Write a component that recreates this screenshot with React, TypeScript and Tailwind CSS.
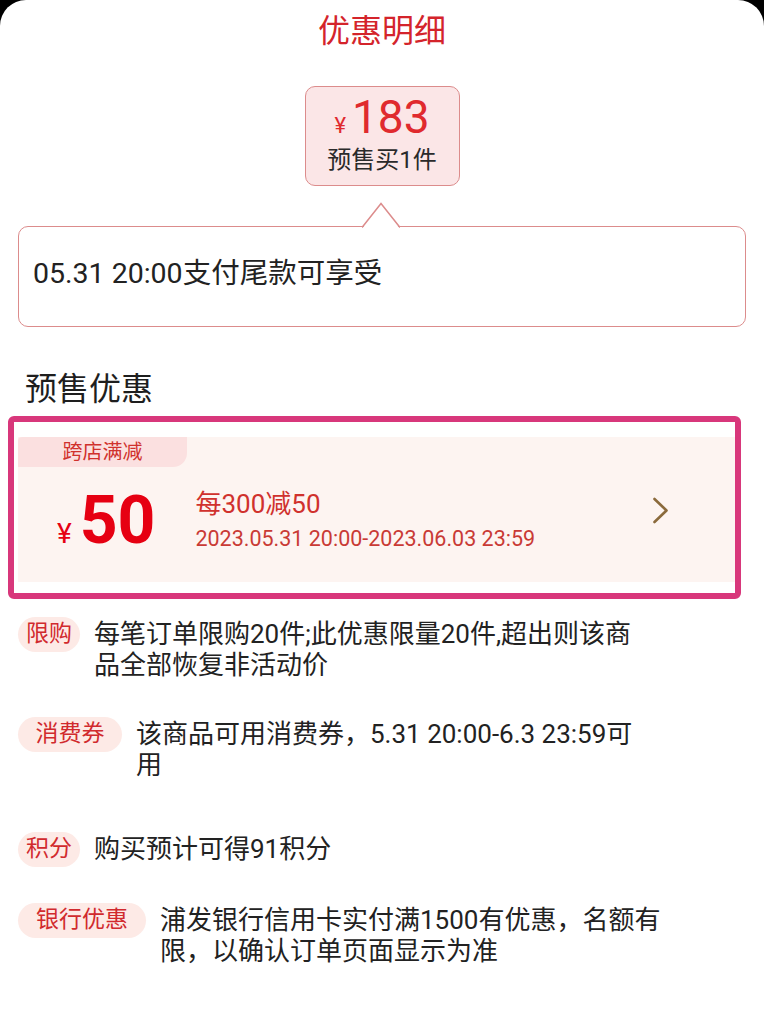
const font = { fontFamily: 'Roboto, "Noto Sans CJK SC", sans-serif' };

interface Rule {
  label: string;
  pillWidth: string;
  top: string;
  lines: string[];
}

const rules: Rule[] = [
  {
    label: '限购',
    pillWidth: 'w-[62px]',
    top: 'mt-[18px]',
    lines: ['每笔订单限购20件;此优惠限量20件,超出则该商', '品全部恢复非活动价'],
  },
  {
    label: '消费券',
    pillWidth: 'w-[104px]',
    top: 'mt-[36px]',
    lines: ['该商品可用消费券，5.31 20:00-6.3 23:59可', '用'],
  },
  {
    label: '积分',
    pillWidth: 'w-[62px]',
    top: 'mt-[51px]',
    lines: ['购买预计可得91积分'],
  },
  {
    label: '银行优惠',
    pillWidth: 'w-[128px]',
    top: 'mt-[36px]',
    lines: ['浦发银行信用卡实付满1500有优惠，名额有', '限，以确认订单页面显示为准'],
  },
];

function PriceBubble() {
  return (
    <div className="flex justify-center mt-[39px]">
      <div className="w-[155px] h-[100px] rounded-[10px] border-[1.5px] border-[#dc8c8c] bg-[#fbe6e7] flex flex-col items-center pt-[6px]">
        <div className="flex items-baseline text-[#e02a2e]">
          <span className="text-[22px] mr-[6px]">¥</span>
          <span className="text-[46px] leading-[48px]">183</span>
        </div>
        <div className="text-[24px] leading-[30px] text-[#2a2a2a] mt-[3px]">预售买1件</div>
      </div>
    </div>
  );
}

function Callout() {
  return (
    <div className="relative mx-[18px] mt-[40px] h-[101px] rounded-[10px] border-[1.5px] border-[#dc8c8c] bg-white pl-[14px] pt-[30px]">
      {/* pointer */}
      <svg
        className="absolute left-[343px] top-[-25px]"
        width="38"
        height="27"
        viewBox="0 0 38 27"
      >
        <path d="M0 27 L19 1.5 L38 27 Z" fill="#fff" />
        <path d="M0 25.5 L19 1.5 L38 25.5" fill="none" stroke="#dc8c8c" strokeWidth="1.5" />
      </svg>
      <div className="text-[28.5px] leading-[34px] text-[#222]">05.31 20:00支付尾款可享受</div>
    </div>
  );
}

function PresaleCard() {
  return (
    <div className="ml-[8px] mr-[23px] mt-[9px] border-[6px] border-[#d8377b] rounded-[6px] pt-[15px] pl-[4px] pb-[11px]">
      <div className="bg-[#fdf4f1] pb-[7px]">
        <div className="w-[169px] h-[30px] bg-[#fbe0e0] rounded-br-[14px] rounded-tl-[4px] flex items-center justify-center text-[20px] text-[#d0312d]">
          跨店满减
        </div>
        <div className="h-[108px] flex items-center pl-[39px]">
          <div className="flex items-baseline text-[#e60012]">
            <span className="text-[28px] mr-[8px]">¥</span>
            <span className="text-[66px] leading-none font-bold">50</span>
          </div>
          <div className="ml-[40px] flex flex-col gap-[6px]">
            <div className="text-[26px] leading-[30px] text-[#d0312d]">每300减50</div>
            <div className="text-[21.5px] leading-[28px] text-[#c93a35]">2023.05.31 20:00-2023.06.03 23:59</div>
          </div>
          <svg
            className="ml-auto mr-[66px] -mt-[22px]"
            width="17"
            height="27"
            viewBox="0 0 17 27"
            fill="none"
          >
            <path d="M2.5 2 L14.5 13.5 L2.5 25" stroke="#8b6a3c" strokeWidth="2.6" strokeLinecap="round" strokeLinejoin="round" />
          </svg>
        </div>
      </div>
    </div>
  );
}

export default function App() {
  return (
    <div className="min-h-screen bg-black" style={font}>
      <div className="bg-white rounded-t-[26px] min-h-[1024px] pb-10">
        <h1 className="text-center text-[32px] leading-none pt-[15px] text-[#d4242b]">优惠明细</h1>

        <PriceBubble />
        <Callout />

        <h2 className="ml-[25px] mt-[44px] text-[32px] leading-[36px] text-[#1e1e1e]">预售优惠</h2>

        <PresaleCard />

        <div className="pl-[18px]">
          {rules.map((rule, i) => (
            <div key={i} className={`flex items-start gap-[14px] ${rule.top}`}>
              <div
                className={`${rule.pillWidth} h-[35px] shrink-0 rounded-full bg-[#fdeae6] flex items-center justify-center text-[23px] text-[#d12a2e]`}
              >
                {rule.label}
              </div>
              <div className="mt-[2px] text-[26px] leading-[31px] text-[#222]">
                {rule.lines.map((line, j) => (
                  <div key={j}>{line}</div>
                ))}
              </div>
            </div>
          ))}
        </div>
      </div>
    </div>
  );
}
